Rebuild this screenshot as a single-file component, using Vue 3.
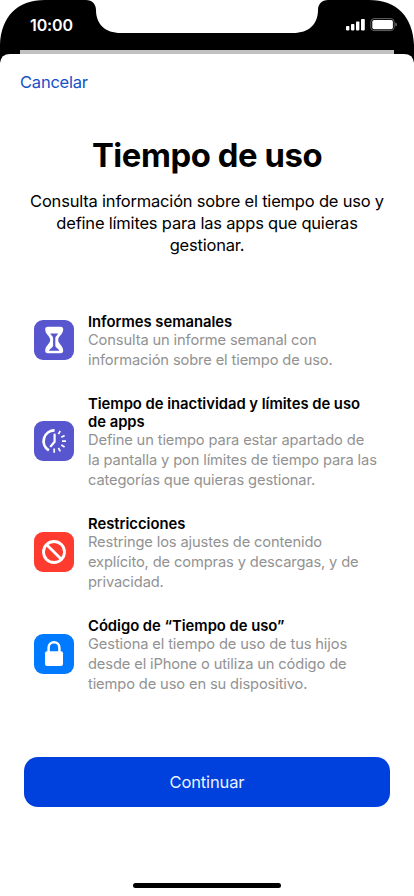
<script setup>
const features = [
  {
    icon: 'hourglass',
    title: ['Informes semanales'],
    body: ['Consulta un informe semanal con', 'información sobre el tiempo de uso.']
  },
  {
    icon: 'downtime',
    title: ['Tiempo de inactividad y límites de uso', 'de apps'],
    body: [
      'Define un tiempo para estar apartado de',
      'la pantalla y pon límites de tiempo para las',
      'categorías que quieras gestionar.'
    ]
  },
  {
    icon: 'restrict',
    title: ['Restricciones'],
    body: [
      'Restringe los ajustes de contenido',
      'explícito, de compras y descargas, y de',
      'privacidad.'
    ]
  },
  {
    icon: 'lock',
    title: ['Código de “Tiempo de uso”'],
    body: [
      'Gestiona el tiempo de uso de tus hijos',
      'desde el iPhone o utiliza un código de',
      'tiempo de uso en su dispositivo.'
    ]
  }
]
</script>

<template>
  <div class="screen">
    <header class="status">
      <svg class="frame" viewBox="0 0 414 66" aria-hidden="true">
        <path d="M0 66V45C1 17 17 0 45 0H86C92 0 96 4 96 10C96 24 105 33 121 33H293C309 33 318 24 318 10C318 4 322 0 328 0H369C397 0 413 17 414 45V66Z" fill="#000" />
        <path d="M20 50H394V55H20Z" fill="#c1c1c1" />
        <path d="M0 66V63Q1 54 10 54H404Q413 54 414 63V66Z" fill="#fff" />
      </svg>
      <span class="time">10:00</span>
      <svg class="indicators" width="52" height="14" viewBox="0 0 52 14" aria-hidden="true">
        <g fill="#fff">
          <rect x="0" y="8" width="3.4" height="4.4" rx=".8" />
          <rect x="5" y="6" width="3.4" height="6.4" rx=".8" />
          <rect x="10" y="3.5" width="3.4" height="8.9" rx=".8" />
          <rect x="15" y="1" width="3.8" height="11.4" rx=".8" />
          <rect x="26.3" y="2" width="20.6" height="9.2" rx="1.8" />
        </g>
        <rect x="24.8" y=".6" width="23.4" height="12" rx="3.3" fill="none" stroke="#626262" />
        <path d="M49.4 4.6Q51 5.2 51 6.6Q51 8 49.4 8.6Z" fill="#707070" />
      </svg>
    </header>

    <nav class="nav"><span class="cancel">Cancelar</span></nav>

    <h1>Tiempo de uso</h1>
    <p class="intro">
      <span>Consulta información sobre el tiempo de uso y</span>
      <span>define límites para las apps que quieras</span>
      <span>gestionar.</span>
    </p>

    <ul class="features">
      <li v-for="f in features" :key="f.icon">
        <svg class="icon" :class="f.icon" viewBox="0 0 40 40" aria-hidden="true">
          <template v-if="f.icon === 'hourglass'">
            <path d="M14 6.8H26.4C28.4 6.8 29.4 8 29.2 9.8C28.7 14.8 24.2 16.2 24.2 20C24.2 23.8 28.7 25.2 29.2 30.2C29.4 32 28.4 33.2 26.4 33.2H14C12 33.2 11 32 11.2 30.2C11.7 25.2 16.2 23.8 16.2 20C16.2 16.2 11.7 14.8 11.2 9.8C11 8 12 6.8 14 6.8Z" fill="#fff" />
            <path d="M16.2 13.4H24.2C23.7 15 21.3 16 21.3 18V25.5C21.3 27.5 24 28.2 25.4 30.7H15C16.4 28.2 19.1 27.5 19.1 25.5V18C19.1 16 16.7 15 16.2 13.4Z" fill="#5856ce" />
          </template>
          <g v-else-if="f.icon === 'downtime'" fill="none" stroke="#fff">
            <path d="M20.6 9.4A10.8 10.8 0 0 0 14.8 29.4" stroke-width="2.8" />
            <path d="M20.6 13.5V20.8L16.8 25.2" stroke-width="2.2" stroke-linecap="round" stroke-linejoin="round" />
            <path d="M24.4 13.2L26.2 10M27.3 16.3L30.6 14.4M28 20.2H32M27.3 24L30.6 25.9M24.4 27L26.3 30.3M20.2 27.6V31.8" stroke-width="1.7" />
          </g>
          <g v-else-if="f.icon === 'restrict'" fill="none" stroke="#fff" stroke-width="2.8">
            <circle cx="20" cy="20" r="10.5" />
            <path d="M12.7 12.7L27.3 27.3" />
          </g>
          <template v-else>
            <path d="M14.6 18V13.8C14.6 6.4 25.4 6.4 25.4 13.8V18" fill="none" stroke="#fff" stroke-width="2.5" />
            <rect x="11" y="17.3" width="18" height="14.8" rx="2" fill="#fff" />
          </template>
        </svg>
        <div class="copy">
          <h2><span v-for="line in f.title" :key="line">{{ line }}</span></h2>
          <p><span v-for="line in f.body" :key="line">{{ line }}</span></p>
        </div>
      </li>
    </ul>

    <footer>
      <button type="button">Continuar</button>
      <div class="home"></div>
    </footer>
  </div>
</template>

<style>
body { margin: 0; background: #fff; }
</style>

<style scoped>
.screen {
  width: 414px;
  height: 896px;
  display: flex;
  flex-direction: column;
  overflow: hidden;
  background: #fff;
  color: #000;
  font-family: Inter, sans-serif;
}
h1, h2, p, ul { margin: 0; padding: 0; }
h1, h2 span, p span { white-space: nowrap; }
h2 span, p span { display: block; }
.status {
  display: grid;
  grid-template-columns: 1fr auto;
  grid-template-rows: 66px;
  flex: none;
}
.frame { grid-area: 1 / 1 / 2 / 3; width: 414px; height: 66px; }
.time {
  grid-area: 1 / 1;
  padding: 15px 0 0 30px;
  line-height: 20px;
  font-size: 16px;
  font-weight: 600;
  letter-spacing: -.1px;
  color: #fff;
}
.indicators { grid-area: 1 / 2; margin: 18px 16px 0 0; }
.nav {
  height: 32px;
  padding-left: 20px;
  line-height: 32px;
  color: #1450c8;
  font-size: 16.5px;
  letter-spacing: -.22px;
  flex: none;
}
h1 {
  margin-top: 36px;
  font-size: 32.8px;
  line-height: 42px;
  font-weight: 700;
  letter-spacing: -.42px;
  text-align: center;
}
.intro {
  margin-top: 14px;
  font-size: 16.5px;
  line-height: 22px;
  letter-spacing: -.2px;
  text-align: center;
}
.features {
  margin-top: 56px;
  padding-left: 34px;
  display: flex;
  flex-direction: column;
  gap: 24px;
  list-style: none;
}
li { display: flex; align-items: center; gap: 14px; }
.icon { width: 40px; height: 40px; flex: none; border-radius: 9px; margin-bottom: 2px; }
.hourglass, .downtime { background: #5856ce; }
.restrict { background: #ff3b30; }
.lock { background: #007aff; }
h2 { padding-top: 1px; margin-bottom: -1px; font-size: 14.8px; line-height: 18px; font-weight: 600; letter-spacing: -.02px; }
.copy p { font-size: 14.7px; line-height: 20px; letter-spacing: -.13px; color: #929292; }
footer {
  margin-top: 63px;
  display: flex;
  flex-direction: column;
  align-items: center;
}
button {
  width: 366px;
  height: 50px;
  padding: 0;
  border: 0;
  border-radius: 14px;
  background: #0040dd;
  color: #e8f3ff;
  font: 400 16.5px/50px Inter, sans-serif;
  letter-spacing: -.13px;
}
.home { width: 148px; height: 5px; margin-top: 76px; border-radius: 3px; background: #000; }
</style>
